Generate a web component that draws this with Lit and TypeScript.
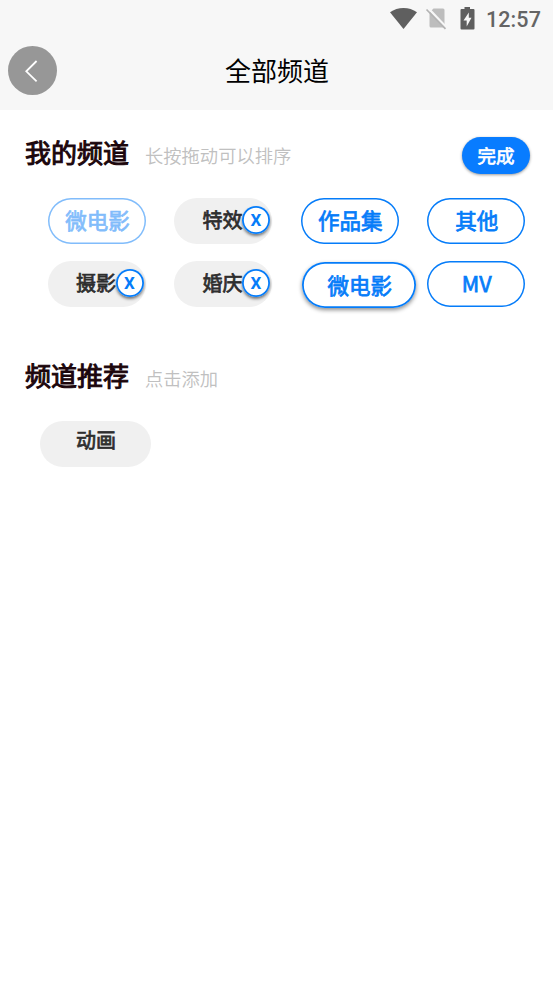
import { LitElement, html, css, nothing } from "lit";
import { customElement, property } from "lit/decorators.js";
import { classMap } from "lit/directives/class-map.js";

type Kind = "fixed" | "plain" | "muted" | "lifted";

interface Channel {
  name: string;
  kind: Kind;
}

@customElement("status-bar")
class StatusBar extends LitElement {
  static styles = css`
    :host {
      display: flex;
      justify-content: flex-end;
      height: 38px;
      padding-right: 12px;
      color: #646464;
    }
    svg {
      display: block;
      width: 94px;
      height: 38px;
    }
    .time {
      margin-left: 6px;
      font: 500 21.5px/40px Roboto, sans-serif;
      letter-spacing: 0.1px;
    }
  `;
  render() {
    return html`
      <svg viewBox="386 0 94 38">
        <path fill="#5f5f5f" d="M403.500 29 L390 12.300 Q396 8 403.500 8 Q411 8 417 12.300 Z" />
        <path fill="#bdbdbd" d="M429.500 12.500 L433.500 8.500 H443 Q444.500 8.500 444.500 10 V27.500 H431 Q429.500 27.500 429.500 26 Z" />
        <path stroke="#f7f7f7" stroke-width="2.500" d="M428 8 L447 28" />
        <path stroke="#b3b3b3" stroke-width="1.700" d="M426.500 9.500 L445.500 28.800" />
        <path fill="#5f5f5f" d="M461.500 9 H464.500 V7 H470 V9 H473.500 Q474.500 9 474.500 10 V28.500 Q474.500 29.500 473.500 29.500 H461.500 Q460.500 29.500 460.500 28.500 V10 Q460.500 9 461.500 9 Z" />
        <path fill="#f7f7f7" d="M468.800 12.500 L463.500 20.500 H466.700 V26.500 L471.500 17.800 H468.800 Z" />
      </svg>
      <span class="time">12:57</span>
    `;
  }
}

@customElement("channel-chip")
class ChannelChip extends LitElement {
  @property() name = "";
  @property() kind: Kind = "plain";
  @property({ type: Boolean }) removable = false;

  static styles = css`
    :host {
      display: block;
      position: relative;
    }
    .chip {
      height: 46px;
      border-radius: 23px;
      background: #fff;
      box-shadow: inset 0 0 0 1.5px #057cf9;
      color: #057cf9;
      text-align: center;
      font-size: 21.500px;
      line-height: 44px;
      white-space: nowrap;
      text-indent: 1px;
      -webkit-text-stroke: 0.75px currentColor;
    }
    .fixed {
      opacity: 0.5;
    }
    .muted {
      box-shadow: none;
      background: #f0f0f0;
      color: #2e2e2e;
      font-size: 20px;
      line-height: 44px;
      text-indent: -2px;
    }
    .tall {
      line-height: 37px;
      text-indent: 1px;
    }
    .lifted {
      width: 114px;
      margin: 1px 0 0 1px;
      line-height: 45px;
      text-indent: 2px;
      box-shadow: inset 0 0 0 1.8px #057cf9, 0 2px 4px rgba(0, 0, 0, 0.45);
    }
    .remove {
      position: absolute;
      top: 8px;
      right: 2.500px;
      box-sizing: border-box;
      width: 28px;
      height: 28px;
      border-radius: 50%;
      background: #fff;
      box-shadow: inset 0 0 0 1.8px #057cf9, 0 2px 3px rgba(0, 0, 0, 0.5);
      color: #057cf9;
      text-align: center;
      font: 700 17px/29px Roboto, sans-serif;
    }
  `;
  render() {
    const tall = this.kind === "muted" && !this.removable;
    return html`
      <div class=${classMap({ chip: true, [this.kind]: true, tall })}>${this.name}</div>
      ${this.removable ? html`<div class="remove">X</div>` : nothing}
    `;
  }
}

@customElement("app-root")
class AppRoot extends LitElement {
  private channels: Channel[] = [
    { name: "微电影", kind: "fixed" },
    { name: "特效", kind: "muted" },
    { name: "作品集", kind: "plain" },
    { name: "其他", kind: "plain" },
    { name: "摄影", kind: "muted" },
    { name: "婚庆", kind: "muted" },
    { name: "微电影", kind: "lifted" },
    { name: "MV", kind: "plain" },
  ];

  static styles = css`
    :host {
      display: block;
      height: 983px;
      overflow: hidden;
      background: #fff;
      font-family: "Noto Sans CJK SC", sans-serif;
    }
    .top {
      height: 110px;
      background: #f7f7f7;
    }
    .nav {
      display: grid;
      grid-template-columns: 49px 1fr 49px;
      align-items: start;
      padding: 8px 8px 0;
      height: 49px;
    }
    .back {
      display: block;
      width: 49px;
      height: 49px;
    }
    .title {
      padding-left: 1px;
      text-align: center;
      font-size: 26px;
      line-height: 47px;
      color: #000;
    }
    .head {
      display: flex;
      align-items: flex-start;
      height: 38px;
      padding: 0 23px 0 25px;
    }
    .mine {
      margin-top: 26px;
    }
    .more {
      margin-top: 52px;
    }
    .name {
      font-size: 26px;
      line-height: 32px;
      color: #1c060c;
      -webkit-text-stroke: 1px currentColor;
    }
    .hint {
      margin: 0 auto 0 16px;
      font-size: 18.300px;
      line-height: 38px;
      font-weight: 350;
      color: #c0c0c0;
    }
    .done {
      margin-top: 1px;
      width: 68px;
      height: 37px;
      border-radius: 19px;
      background: #087cff;
      box-shadow: 0 1px 3px rgba(0, 0, 0, 0.4);
      color: #fff;
      text-align: center;
      font-size: 18.500px;
      line-height: 36px;
      -webkit-text-stroke: 0.7px currentColor;
    }
    .grid {
      display: grid;
      grid-template-columns: repeat(4, 98px);
      grid-auto-rows: 46px;
      gap: 17px 28.400px;
      padding: 24px 0 0 48px;
    }
    .extra {
      display: block;
      width: 111px;
      margin: 24px 0 0 40px;
    }
  `;
  render() {
    return html`
      <div class="top">
        <status-bar></status-bar>
        <div class="nav">
          <svg class="back" viewBox="0 0 49 49">
            <circle cx="24.500" cy="24.500" r="24.500" fill="#979797" />
            <path d="M28.600 15 L18.300 25.300 L28.600 35.300" fill="none" stroke="#fff" stroke-width="1.800" />
          </svg>
          <div class="title">全部频道</div>
        </div>
      </div>
      <div class="head mine">
        <span class="name">我的频道</span>
        <span class="hint">长按拖动可以排序</span>
        <div class="done">完成</div>
      </div>
      <div class="grid">
        ${this.channels.map(
          (c) => html`<channel-chip
            .name=${c.name}
            .kind=${c.kind}
            .removable=${c.kind === "muted"}
          ></channel-chip>`
        )}
      </div>
      <div class="head more">
        <span class="name">频道推荐</span>
        <span class="hint">点击添加</span>
      </div>
      <channel-chip class="extra" .name=${"动画"} .kind=${"muted"}></channel-chip>
    `;
  }
}
